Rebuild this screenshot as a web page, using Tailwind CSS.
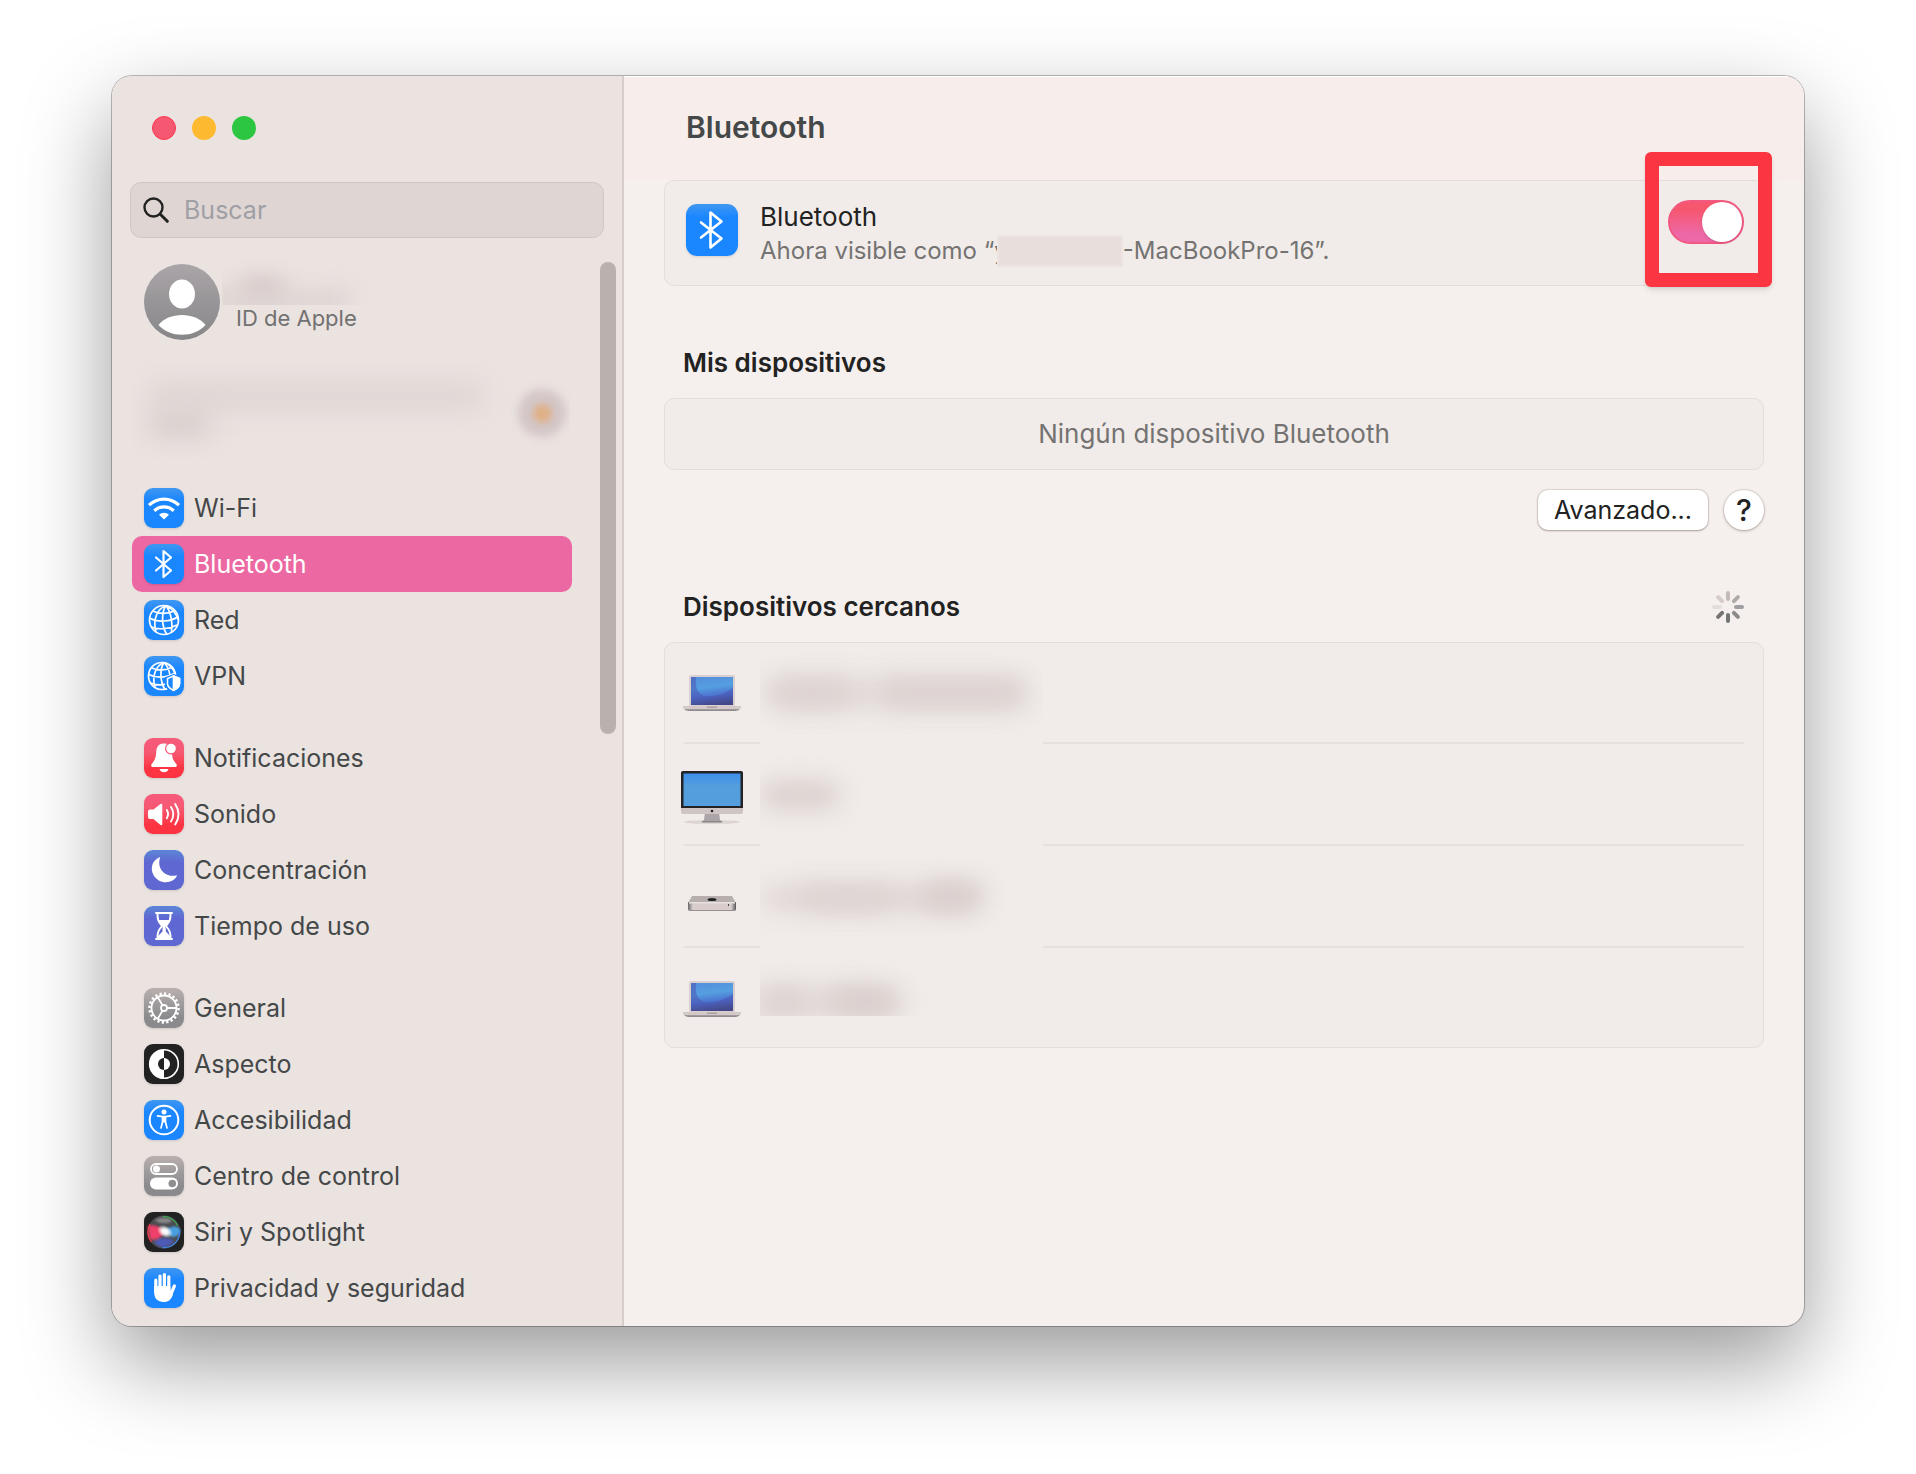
<!DOCTYPE html>
<html lang="es">
<head>
    <meta charset="UTF-8">
    <meta name="viewport" content="width=device-width, initial-scale=1.0">
    <title>Bluetooth</title>
    <script src="https://cdn.jsdelivr.net/npm/@tailwindcss/browser@4"></script>
</head>
<body class="bg-white min-h-screen px-28 pt-[76px] pb-[148px] font-['Inter','Liberation_Sans',sans-serif] text-[25px] leading-8 text-[#454849]">
    <div class="flex rounded-[20px] overflow-hidden bg-[#f5f0ed] shadow-[0_0_0_1px_rgba(0,0,0,0.26),0_36px_88px_rgba(0,0,0,0.4)]">

        <!-- Sidebar -->
        <aside class="relative w-[512px] shrink-0 bg-[#ebe3e0] border-r-2 border-[#d6cecb] pt-10 pb-[10px]">
            <div class="flex gap-4 pl-10">
                <button type="button" aria-label="Cerrar" class="size-6 rounded-full bg-[#f65872] border border-[#fb3a52]"></button>
                <button type="button" aria-label="Minimizar" class="size-6 rounded-full bg-[#fdb92f]"></button>
                <button type="button" aria-label="Ampliar" class="size-6 rounded-full bg-[#2cc641]"></button>
            </div>

            <label class="mt-[42px] ml-[18px] mr-[18px] h-14 flex items-center gap-[15px] rounded-[11px] bg-[#dfd6d4] border border-[#d0c7c5] pl-3">
                <svg class="size-[26px] shrink-0" viewBox="0 0 26 26" fill="none" stroke="#222" stroke-width="2.4" stroke-linecap="round"><circle cx="10.5" cy="10.5" r="9"/><path d="M17.3 17.3l7 7" stroke-width="3"/></svg>
                <input type="search" aria-label="Buscar" placeholder="Buscar" class="w-full bg-transparent outline-none placeholder:text-[#a09fa4]">
            </label>

            <a href="#" class="mt-[15px] ml-8 flex items-end">
                <svg class="size-[76px]" viewBox="0 0 76 76">
                    <defs>
                        <linearGradient id="avatar" x1="0" y1="0" x2="0" y2="1"><stop offset="0" stop-color="#aaa5a8"/><stop offset="1" stop-color="#868688"/></linearGradient>
                    </defs>
                    <circle cx="38" cy="38" r="38" fill="url(#avatar)"/>
                    <ellipse cx="38" cy="30" rx="13" ry="14.5" fill="#fff"/>
                    <path d="M14.500 61C24 47.500 52 47.500 61.500 61C50 74 26 74 14.500 61z" fill="#fff"/>
                </svg>
                <span class="flex flex-col h-[87px] ml-[2px]">
                    <span class="relative block w-[172px] h-[52px] overflow-hidden">
                        <span class="absolute left-4 top-6 w-12 h-8 rounded-full bg-[#d3c6c5] blur-[10px]"></span>
                        <span class="absolute -left-4 top-9 w-36 h-6 bg-[#ded5d3] blur-[10px]"></span>
                    </span>
                    <span class="pl-[14px] text-[22px] leading-[27px] text-[#727171]">ID de Apple</span>
                </span>
            </a>

            <div class="relative mt-[22px] ml-5 w-[438px] h-24 overflow-hidden">
                <span class="absolute left-4 top-5 w-[336px] h-7 rounded-full bg-[#ded6d3] blur-[12px]"></span>
                <span class="absolute left-4 top-12 w-16 h-7 rounded-full bg-[#d8cfcd] blur-[12px]"></span>
                <span class="absolute left-[386px] top-[27px] size-12 rounded-full bg-[#d3c6c6] blur-[4px]"></span>
                <span class="absolute left-[401px] top-[42px] size-[19px] rounded-full bg-[#dfb088] blur-[3px]"></span>
            </div>

            <nav class="mt-[22px] ml-5 w-[440px] space-y-[26px]">
                <ul>
                    <li><a href="#" class="flex items-center gap-[10px] h-14 pl-3 rounded-[10px]">
                        <svg class="size-10 rounded-[9px] bg-linear-to-b from-[#3f97f0] via-[#1a86ff] via-30% to-[#1a86ff] shadow-sm" viewBox="0 0 40 40" fill="none" stroke="#fff" stroke-width="3.200"><path d="M5 17.200A21.500 21.500 0 0 1 35 17.200M10.300 22.800A14 14 0 0 1 29.700 22.800"/><path d="M15 26.800a7 7 0 0 1 10 0l-5 4.800z" fill="#fff" stroke="none"/></svg>
                        Wi-Fi</a></li>
                    <li><a href="#" aria-current="page" class="flex items-center gap-[10px] h-14 pl-3 rounded-[10px] bg-[#ec68a3] text-white">
                        <svg class="size-10 rounded-[9px] bg-linear-to-b from-[#3f97f0] via-[#1a86ff] via-30% to-[#1a86ff] shadow-sm" viewBox="0 0 40 40" fill="none" stroke="#fff" stroke-width="2.200" stroke-linejoin="round" stroke-linecap="round"><path d="M12 13.500L27 26.500 19.500 33V7L27 13.500 12 26.500"/></svg>
                        Bluetooth</a></li>
                    <li><a href="#" class="flex items-center gap-[10px] h-14 pl-3 rounded-[10px]">
                        <svg class="size-10 rounded-[9px] bg-linear-to-b from-[#3f97f0] via-[#1a86ff] via-30% to-[#1a86ff] shadow-sm" viewBox="0 0 40 40" fill="none" stroke="#fff" stroke-width="1.700"><circle cx="20" cy="20" r="14.500"/><path d="M22 5.500C13 9 8.500 20 12 32M22 5.500C17.500 12 17 26 23 34.500M22 5.500C27 12 29 24 27.500 32M22 5.500C28 8 33 15 34.300 20M9 11C15 14.500 25 14 31 10.500M5.800 18C13 22.500 27 22 34 16.500M7.500 27C14 30 26 29 33 25"/></svg>
                        Red</a></li>
                    <li><a href="#" class="flex items-center gap-[10px] h-14 pl-3 rounded-[10px]">
                        <svg class="size-10 rounded-[9px] bg-linear-to-b from-[#3f97f0] via-[#1a86ff] via-30% to-[#1a86ff] shadow-sm" viewBox="0 0 40 40" fill="none" stroke="#fff" stroke-width="1.700"><circle cx="18" cy="20" r="13.500"/><path d="M20 6.500C12 9.500 7.500 20 11 31M20 6.500C16 12 15.500 25 21 33.500M20 6.500C24.500 11 26 17 26 22M20 6.500C25 8 29 13 31 17M8 12C14 15 23 14.500 28 11M5 18.500C12 22.500 23 22 31 17M6.500 27C12 29.500 19 29 24 27.500"/><path d="M29.500 19l7.500 3v5.500c0 4-3 6.500-7.500 8.500-4.500-2-7.500-4.500-7.500-8.500V22z" fill="#1a86ff" stroke="#1a86ff" stroke-width="2"/><path d="M29.500 20l6 2.500v5c0 3.200-2.500 5.200-6 6.800-3.500-1.600-6-3.600-6-6.800v-5z" stroke-width="1.500"/><path d="M29.500 20l6 2.500v5c0 3.200-2.500 5.200-6 6.800z" fill="#fff"/></svg>
                        VPN</a></li>
                </ul>
                <ul>
                    <li><a href="#" class="flex items-center gap-[10px] h-14 pl-3 rounded-[10px]">
                        <svg class="size-10 rounded-[9px] bg-linear-to-b from-[#f65b7c] via-[#f65872] via-35% to-[#fc3442] to-75% shadow-sm" viewBox="0 0 40 40" fill="#fff"><path d="M19.500 5.500c-4.500 0-7 3.500-7.200 8-.3 6-1.300 8.500-4.600 12.500-1.200 1.500-.5 3 1.300 3h22c1.800 0 2.500-1.500 1.300-3-2.600-3.200-3.800-5-4.200-9.500-4 .3-7-2.300-7-6 0-2 .8-3.600 2-4.600-1-.3-2.400-.4-3.600-.4zM15.500 31h9c-.6 2.200-2.300 3.300-4.500 3.300S16.100 33.200 15.500 31z"/><circle cx="27" cy="10.500" r="4.800"/></svg>
                        Notificaciones</a></li>
                    <li><a href="#" class="flex items-center gap-[10px] h-14 pl-3 rounded-[10px]">
                        <svg class="size-10 rounded-[9px] bg-linear-to-b from-[#f65b7c] via-[#f65872] via-35% to-[#fc3442] to-75% shadow-sm" viewBox="0 0 40 40" fill="none" stroke="#fff" stroke-width="1.900" stroke-linecap="round"><path d="M6 15.500h3.500L16.500 10q1.800-1 1.800.8v19.400q0 1.800-1.800.8L9.500 25H6q-2 0-2-2v-5.500q0-2 2-2z" fill="#fff" stroke="none"/><path d="M22.800 16c1.600 2.600 1.600 5.700 0 8.300M27 13c3 4.700 3 9.800 0 14.500M31.200 10c4.600 7 4.600 13.500 0 20.500"/></svg>
                        Sonido</a></li>
                    <li><a href="#" class="flex items-center gap-[10px] h-14 pl-3 rounded-[10px]">
                        <svg class="size-10 rounded-[9px] bg-linear-to-b from-[#5a86d6] via-[#5f68d2] via-30% to-[#5f68d2] shadow-sm" viewBox="0 0 40 40" fill="#fff"><path d="M15.500 7.300C8 10.500 6 18.500 9.500 25c4 7.500 14 9.500 20.500 4.500 1.600-1.200 2.600-2.800 3-4.300C22 28 12.500 19.500 16 8c.1-.5 0-.8-.5-.7z"/></svg>
                        Concentración</a></li>
                    <li><a href="#" class="flex items-center gap-[10px] h-14 pl-3 rounded-[10px]">
                        <svg class="size-10 rounded-[9px] bg-linear-to-b from-[#5a86d6] via-[#5f68d2] via-30% to-[#5f68d2] shadow-sm" viewBox="0 0 40 40" fill="none" stroke="#fff" stroke-width="2" stroke-linejoin="round" stroke-linecap="round"><path d="M12 7h16M12 33h16M13.500 7c0 7 .5 8 4.500 13-4 5-4.500 6-4.500 13h13c0-7-.5-8-4.500-13 4-5 4.500-6 4.500-13z"/><path d="M14.500 14h11c-.6 2-2 3.500-4 6l.4 5.500 4.100 4.500v3H14v-3l4.500-4.500V20c-2.200-2.500-3.500-4-4-6z" fill="#fff" stroke="none"/></svg>
                        Tiempo de uso</a></li>
                </ul>
                <ul>
                    <li><a href="#" class="flex items-center gap-[10px] h-14 pl-3 rounded-[10px]">
                        <svg class="size-10 rounded-[9px] bg-linear-to-b from-[#b9b0ae] to-[#8a8a8d] to-75% shadow-sm" viewBox="0 0 40 40" fill="none" stroke="#fff" stroke-width="1.800"><circle cx="20" cy="20" r="14.500" pathLength="40" stroke-width="2.600" stroke-dasharray="1 1"/><circle cx="20" cy="20" r="12.500"/><circle cx="20" cy="20" r="3"/><path d="M23 20h10M18.500 17.400l-5-8.600M18.500 22.600l-5 8.600"/></svg>
                        General</a></li>
                    <li><a href="#" class="flex items-center gap-[10px] h-14 pl-3 rounded-[10px]">
                        <svg class="size-10 rounded-[9px] bg-[#222] shadow-sm" viewBox="0 0 40 40"><circle cx="20" cy="20" r="14.300" fill="none" stroke="#fff" stroke-width="1.600"/><path d="M20 5.500a14.500 14.500 0 0 0 0 29z" fill="#fff"/><path d="M20 14a6 6 0 0 0 0 12z" fill="#222"/><path d="M20 14a6 6 0 0 1 0 12z" fill="#fff"/></svg>
                        Aspecto</a></li>
                    <li><a href="#" class="flex items-center gap-[10px] h-14 pl-3 rounded-[10px]">
                        <svg class="size-10 rounded-[9px] bg-linear-to-b from-[#3f97f0] via-[#1a86ff] via-30% to-[#1a86ff] shadow-sm" viewBox="0 0 40 40" fill="none" stroke="#fff" stroke-width="2" stroke-linecap="round" stroke-linejoin="round"><circle cx="20" cy="20" r="14.300"/><circle cx="20" cy="12" r="2.500" fill="#fff" stroke="none"/><path d="M13.500 15.800l5 .9h3l5-.9" stroke-width="1.700"/><path d="M18.500 17h3v5l1.500 6M18.500 17v5L17 28" stroke-width="1.700"/><path d="M18.500 16.500h3v6h-3z" fill="#fff" stroke="none"/></svg>
                        Accesibilidad</a></li>
                    <li><a href="#" class="flex items-center gap-[10px] h-14 pl-3 rounded-[10px]">
                        <svg class="size-10 rounded-[9px] bg-linear-to-b from-[#b9b0ae] to-[#8a8a8d] to-75% shadow-sm" viewBox="0 0 40 40"><rect x="7" y="8" width="26" height="10" rx="5" fill="none" stroke="#fff" stroke-width="1.800"/><circle cx="12.500" cy="13" r="3.500" fill="#fff"/><rect x="6" y="21.500" width="28" height="12" rx="6" fill="#fff"/><circle cx="28.300" cy="27.500" r="3.800" fill="#8f8f91"/></svg>
                        Centro de control</a></li>
                    <li><a href="#" class="flex items-center gap-[10px] h-14 pl-3 rounded-[10px]">
                        <svg class="size-10 rounded-[9px] bg-[#222] shadow-sm" viewBox="0 0 40 40">
                            <defs>
                                <radialGradient id="siriCore"><stop offset="0" stop-color="#fff"/><stop offset=".4" stop-color="#fff" stop-opacity=".9"/><stop offset="1" stop-color="#fff" stop-opacity="0"/></radialGradient>
                                <filter id="siriBlur"><feGaussianBlur stdDeviation="1.200"/></filter>
                            </defs>
                            <circle cx="20" cy="20" r="16.500" fill="#4a4c50"/>
                            <g filter="url(#siriBlur)">
                                <path d="M4 14c6-2 12 0 17 6-5 7-11 9-15 7z" fill="#ee3f68"/>
                                <path d="M21 19c5-5 11-6 15-2 0 6-3 8-8 8z" fill="#4aa0e0"/>
                                <path d="M11 9c6-5 14-4 17 0-3 3-11 3-17 0z" fill="#888"/>
                                <path d="M10 30c6-5 14-5 20-1-6 8-15 8-20 1z" fill="#4d5ab8"/>
                            </g>
                            <path d="M19 4.500a15.500 15.500 0 0 1 14.500 9" fill="none" stroke="#35b54d" stroke-width="1.200"/>
                            <path d="M35.500 18a15.500 15.500 0 0 1-17 17.500" fill="none" stroke="#4186e8" stroke-width="1.300"/>
                            <path d="M7.500 30A15.500 15.500 0 0 1 6 12" fill="none" stroke="#f23a4b" stroke-width="1.300"/>
                            <ellipse cx="21" cy="19.500" rx="8.500" ry="6" fill="url(#siriCore)" transform="rotate(30 21 19.500)"/>
                        </svg>
                        Siri y Spotlight</a></li>
                    <li><a href="#" class="flex items-center gap-[10px] h-14 pl-3 rounded-[10px]">
                        <svg class="size-10 rounded-[9px] bg-linear-to-b from-[#3f97f0] via-[#1a86ff] via-30% to-[#1a86ff] shadow-sm" viewBox="0 0 40 40" fill="none" stroke="#fff" stroke-width="3.200" stroke-linecap="round"><path d="M11.800 12V24M16 8V22M20.400 6.500V22M24.800 8.800V22M30.400 18L27 26"/><path d="M10.200 18v6.500c0 6 3.600 9.500 9.400 9.500 5 0 7.700-2.500 9.400-7.500l-2.600-4.500V18z" fill="#fff" stroke="none"/></svg>
                        Privacidad y seguridad</a></li>
                </ul>
            </nav>

            <!-- Scroll thumb -->
            <div class="absolute right-[6px] top-[186px] w-4 h-[472px] rounded-full bg-[#bab0ae]"></div>
        </aside>

        <!-- Content -->
        <main class="grow">
            <header class="h-[104px] pt-[32px] pl-[62px] bg-[#f7eeeb] border-t border-white">
                <h1 class="text-[30px] leading-9 font-semibold">Bluetooth</h1>
            </header>

            <div class="px-10">
                <section class="relative flex items-start h-[106px] rounded-[10px] bg-[#f1ece9] border border-[#e4deda] pl-[21px] pr-[19px]">
                    <svg class="mt-[23px] size-[52px] rounded-[11px] bg-linear-to-b from-[#3f97f0] via-[#1a86ff] via-25% to-[#1a86ff] shadow-sm" viewBox="0 0 52 52" fill="none" stroke="#fff" stroke-width="2.600" stroke-linejoin="round" stroke-linecap="round"><path d="M15 18.500L35.500 34.500 24.500 43.500V8.500L35.500 17.500 15 33.500"/></svg>
                    <div class="mt-[18px] ml-[22px]">
                        <label for="bluetooth" class="block text-[26px] leading-9 text-[#222]">Bluetooth</label>
                        <p class="flex items-center text-[24px] leading-8 text-[#747372]">Ahora visible como “y<span class="relative -ml-[11px] w-[126px] h-8 bg-[#e8dfdd] border-2 border-[#ebe4e1]"></span>-MacBookPro-16”.</p>
                    </div>
                    <input id="bluetooth" type="checkbox" role="switch" checked class="appearance-none ml-auto mt-[19px] w-[76px] h-11 rounded-full bg-linear-to-b from-[#f6566e] from-20% to-[#ec68a6] to-80% border-2 border-[#f25880] before:block before:size-10 before:ml-8 before:rounded-full before:bg-white before:shadow">
                    <div class="absolute -right-[9px] -top-[29px] w-[127px] h-[135px] rounded-md border-[14px] border-[#fc3543] shadow-md pointer-events-none"></div>
                </section>

                <h2 class="mt-[61px] ml-[19px] text-[26px] leading-8 font-semibold text-[#222]">Mis dispositivos</h2>
                <p class="mt-[19px] h-[72px] flex items-center justify-center rounded-[10px] bg-[#f1ece9] border border-[#e4deda] text-[26px] text-[#747372]">Ningún dispositivo Bluetooth</p>

                <div class="mt-5 flex justify-end gap-4">
                    <button type="button" class="h-10 px-4 rounded-[10px] bg-white text-[#222] shadow-[0_0_1px_1px_rgba(90,60,60,0.15),0_1px_2px_rgba(90,60,60,0.35)]">Avanzado...</button>
                    <button type="button" aria-label="Ayuda" class="size-10 rounded-full bg-white text-[30px] font-medium text-[#222] shadow-[0_0_1px_1px_rgba(90,60,60,0.12),0_1px_3px_rgba(90,60,60,0.35)]">?</button>
                </div>

                <div class="mt-[61px] flex items-center justify-between pl-[19px] pr-5">
                    <h2 class="text-[26px] leading-8 font-semibold text-[#222]">Dispositivos cercanos</h2>
                    <svg class="size-8" viewBox="0 0 32 32" fill="none" stroke-width="4" stroke-linecap="round">
                        <path d="M16 2v6" stroke="#c4bab9"/>
                        <path d="M25.900 6.100l-4 4" stroke="#b0aaa9"/>
                        <path d="M30 16h-6" stroke="#9f9fa3"/>
                        <path d="M25.900 25.900l-4-4" stroke="#8c8b8c"/>
                        <path d="M16 30v-6" stroke="#757474"/>
                        <path d="M6.100 25.900l4-4" stroke="#757474"/>
                        <path d="M2 16h6" stroke="#e4dedb"/>
                        <path d="M6.100 6.100l4 4" stroke="#d6cbc9"/>
                    </svg>
                </div>

                <ul class="mt-[19px] rounded-[10px] bg-[#f1ece9] border border-[#e4deda] px-[19px]">
                    <li class="flex items-center h-[101px] border-b-2 border-[#e6e0dc]">
                        <svg class="size-16 -ml-1" viewBox="0 0 64 64">
                            <defs><linearGradient id="screen" x1="0.400" y1="0" x2="0.600" y2="1"><stop offset="0" stop-color="#5590dc"/><stop offset=".35" stop-color="#559fe0"/><stop offset=".65" stop-color="#4c74d0"/><stop offset="1" stop-color="#3c4060"/></linearGradient></defs>
                            <rect x="9" y="14" width="46" height="32" rx="2" fill="#d9cfce"/>
                            <rect x="11" y="16" width="42" height="28" fill="url(#screen)"/>
                            <path d="M11 16h5c-1 10 1 15 6 18 10 4 22-1 31-7v17H11z" fill="#4b4fb0" opacity=".5"/>
                            <path d="M3 45h58v2q-2 2.500-6 2.500H9q-4 0-6-2.500z" fill="#d5c8c8"/><path d="M4 48.200h56q-2 1.800-5 1.800H9q-3 0-5-1.800z" fill="#8f8b8e"/><path d="M27 45.500h10v1.500H27z" fill="#a9a2a2"/>
                        </svg>
                        <div class="relative self-stretch ml-4 -mb-[2px] w-[283px] overflow-hidden bg-[#f1ece9]">
                            <div class="absolute left-1 top-9 w-[264px] h-7 rounded-full bg-[#e2d9d7] blur-[12px]"></div>
                            <div class="absolute left-3 top-9 w-20 h-7 rounded-full bg-[#dcd2d0] blur-[12px]"></div>
                            <div class="absolute left-[120px] top-9 w-[144px] h-7 rounded-full bg-[#dcd2d0] blur-[12px]"></div>
                        </div>
                    </li>
                    <li class="flex items-center h-[102px] border-b-2 border-[#e6e0dc]">
                        <svg class="size-16 -ml-1" viewBox="0 0 64 64">
                            <defs><linearGradient id="imac" x1="0" y1="0" x2="0" y2="1"><stop offset="0" stop-color="#3d8fea"/><stop offset=".4" stop-color="#559edd"/></linearGradient></defs>
                            <ellipse cx="32" cy="60" rx="28" ry="2" fill="#ddd4d2"/>
                            <path d="M25 50h14l1 8 3 2H21l3-2z" fill="#aba5a7"/><path d="M22 59h20v1.500H22z" fill="#888"/>
                            <rect x="1" y="9" width="62" height="43" rx="2" fill="#cfc4c4"/>
                            <path d="M3 9h58q2 0 2 2v35H1V11q0-2 2-2z" fill="#232325"/>
                            <rect x="3.500" y="11.500" width="57" height="32.500" fill="url(#imac)"/>
                            <circle cx="32" cy="49" r="1.300" fill="#222"/>
                        </svg>
                        <div class="relative self-stretch ml-4 -mb-[2px] w-[283px] overflow-hidden bg-[#f1ece9]">
                            <div class="absolute left-0 top-[37px] w-20 h-7 rounded-full bg-[#dacfcd] blur-[12px]"></div>
                        </div>
                    </li>
                    <li class="flex items-center h-[102px] border-b-2 border-[#e6e0dc]">
                        <svg class="size-16 -ml-1" viewBox="0 0 64 64">
                            <defs><linearGradient id="mini"><stop offset="0" stop-color="#66666a"/><stop offset=".1" stop-color="#d8cdcc"/><stop offset=".9" stop-color="#d8cdcc"/><stop offset="1" stop-color="#55555a"/></linearGradient></defs>
                            <path d="M12 32h40l4 7H8z" fill="#b7aeae"/>
                            <path d="M8 38h48v7q0 2-2 2H10q-2 0-2-2z" fill="url(#mini)"/>
                            <path d="M9 38h46v1.500H9z" fill="#e8e0de"/>
                            <path d="M10 46h44v1H10z" fill="#979293"/>
                            <ellipse cx="32" cy="35.500" rx="4.500" ry="1.600" fill="#222"/><path d="M48 40h1v2h-1z" fill="#444"/>
                        </svg>
                        <div class="relative self-stretch ml-4 -mb-[2px] w-[283px] overflow-hidden bg-[#f1ece9]">
                            <div class="absolute left-0 top-10 w-[216px] h-6 rounded-full bg-[#e0d6d4] blur-[12px]"></div>
                            <div class="absolute left-10 top-10 w-24 h-6 rounded-full bg-[#ddd3d1] blur-[12px]"></div>
                            <div class="absolute left-40 top-9 w-16 h-7 rounded-full bg-[#d8cdcb] blur-[12px]"></div>
                        </div>
                    </li>
                    <li class="flex items-center h-[99px]">
                        <svg class="size-16 -ml-1" viewBox="0 0 64 64">
                            <rect x="9" y="15" width="46" height="32" rx="2" fill="#d9cfce"/>
                            <rect x="11" y="17" width="42" height="28" fill="url(#screen)"/>
                            <path d="M11 17h5c-1 10 1 15 6 18 10 4 22-1 31-7v17H11z" fill="#4b4fb0" opacity=".5"/>
                            <path d="M3 46h58v2q-2 2.500-6 2.500H9q-4 0-6-2.500z" fill="#d5c8c8"/><path d="M4 49.200h56q-2 1.800-5 1.800H9q-3 0-5-1.800z" fill="#8f8b8e"/><path d="M27 46.500h10v1.500H27z" fill="#a9a2a2"/>
                        </svg>
                        <div class="relative self-start ml-4 w-[283px] h-[68px] overflow-hidden">
                            <div class="absolute -left-2 top-10 w-36 h-7 rounded-full bg-[#e2d9d7] blur-[12px]"></div>
                            <div class="absolute left-0 top-10 w-12 h-7 rounded-full bg-[#dcd2d0] blur-[12px]"></div>
                            <div class="absolute left-[68px] top-10 w-[72px] h-7 rounded-full bg-[#d8cdcb] blur-[12px]"></div>
                        </div>
                    </li>
                </ul>
            </div>
        </main>
    </div>
</body>
</html>
